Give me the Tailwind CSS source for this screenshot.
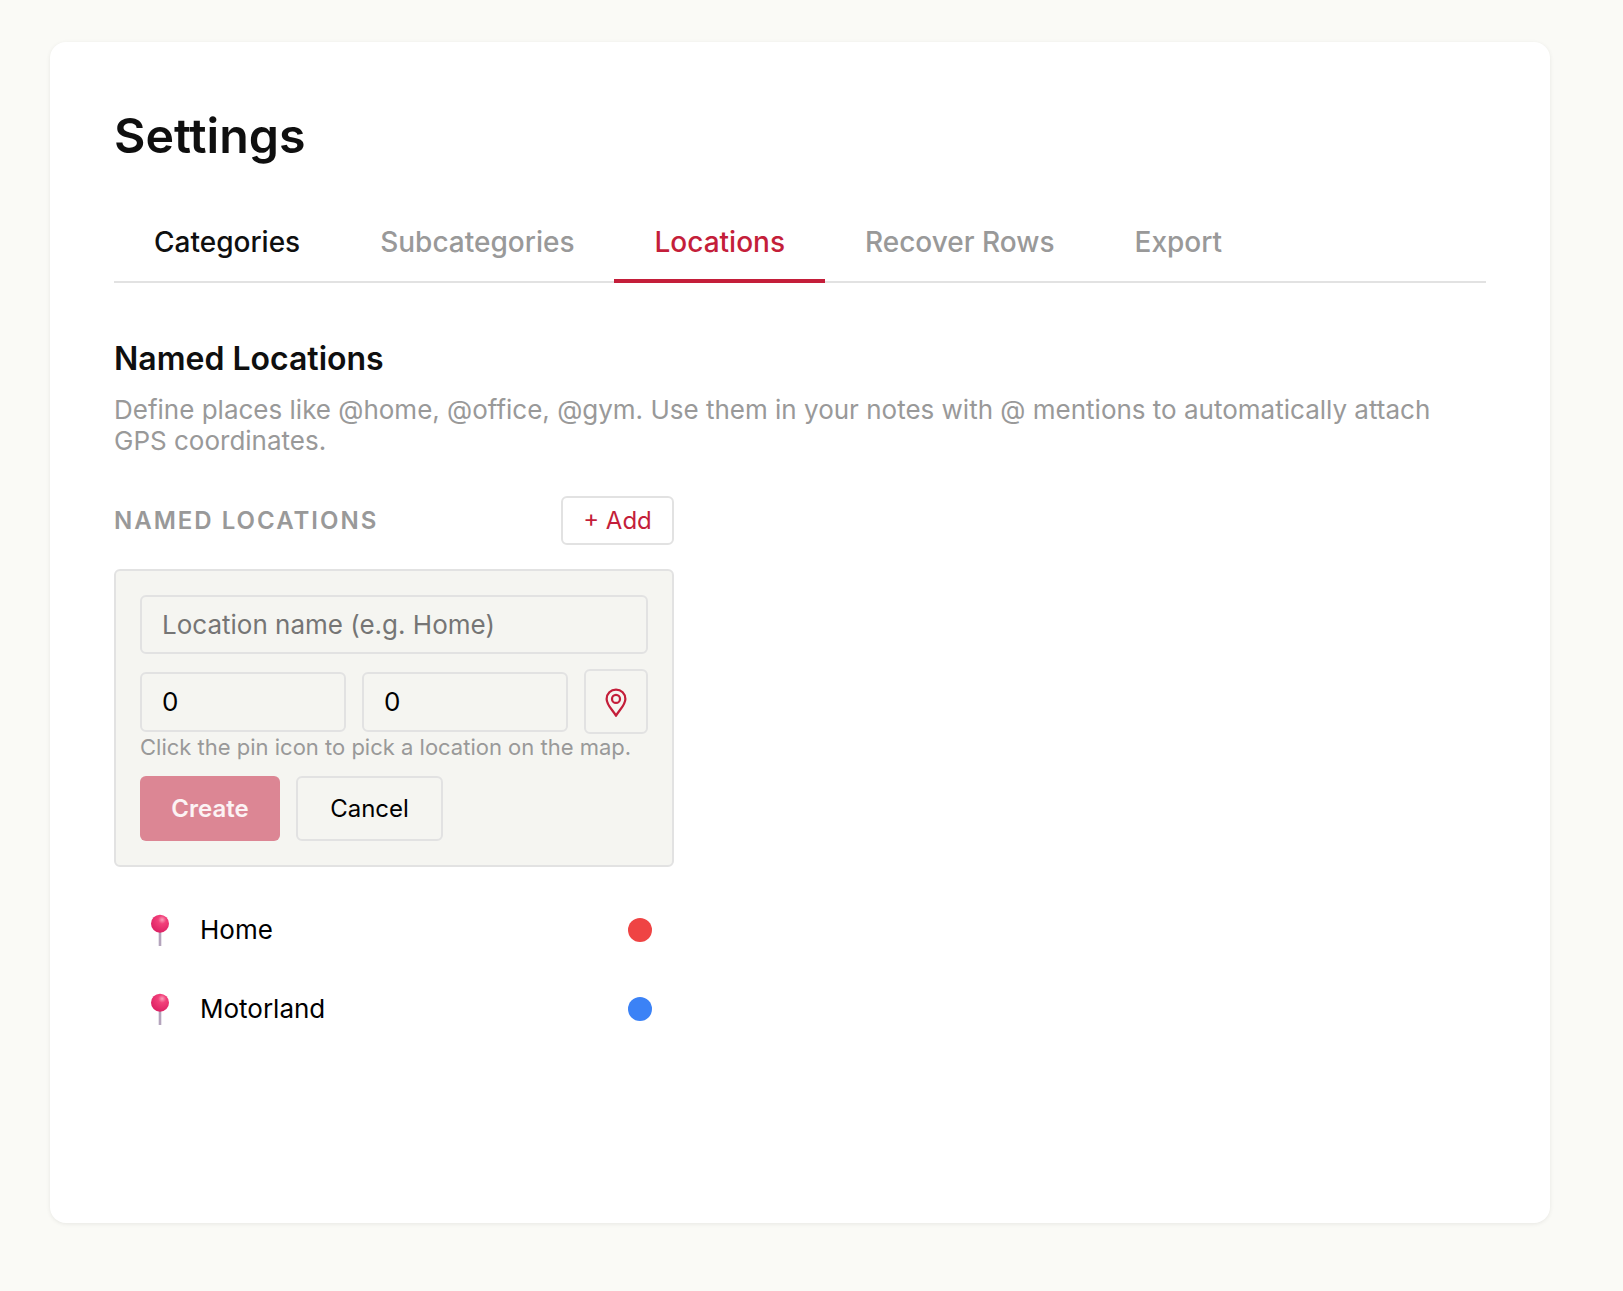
<!DOCTYPE html>
<html lang="en">
  <head>
    <meta charset="UTF-8" />
    <title>Settings</title>
    <script src="https://cdn.jsdelivr.net/npm/@tailwindcss/browser@4"></script>
  </head>
  <body class="bg-[#fafaf6] min-h-screen font-['Inter',sans-serif] text-[#0f0f0f]">
    <div class="pt-[42px] pl-[50px]">
      <div class="w-[1500px] h-[1181px] bg-white rounded-[16px] shadow-[0_1px_4px_rgba(0,0,0,0.08)] px-[64px] pt-[60px]">
        <h1 class="text-[48.3px] leading-[68px] font-semibold">Settings</h1>

        <!-- tabs -->
        <div class="flex mt-[32px] h-[81px] border-b-2 border-[#e2e2e2] text-[28px] font-medium text-[#999999]">
          <button class="px-[40px] h-[81px] pt-[3px] border-b-[4px] border-transparent text-[#0f0f0f]">Categories</button>
          <button class="px-[40px] h-[81px] pt-[3px] border-b-[4px] border-transparent">Subcategories</button>
          <button class="px-[40px] h-[81px] pt-[3px] border-b-[4px] border-[#c41e3a] text-[#c41e3a]">Locations</button>
          <button class="px-[40px] h-[81px] pt-[3px] border-b-[4px] border-transparent">Recover Rows</button>
          <button class="px-[40px] h-[81px] pt-[3px] border-b-[4px] border-transparent">Export</button>
        </div>

        <h2 class="mt-[54px] text-[32px] leading-[44px] font-semibold">Named Locations</h2>
        <p class="mt-[13px] text-[26px] leading-[31px] text-[#999999]">Define places like @home, @office, @gym. Use them in your notes with @ mentions to automatically attach GPS coordinates.</p>

        <div class="w-[560px] mt-[40px]">
          <div class="flex items-center justify-between h-[49px]">
            <span class="text-[24px] font-semibold tracking-[2px] uppercase text-[#999999]">Named Locations</span>
            <button class="w-[113px] h-[49px] border-2 border-[#e2e2e2] rounded-[6px] text-[24px] text-[#c41e3a]">+ Add</button>
          </div>

          <!-- create form -->
          <div class="mt-[24px] h-[298px] bg-[#f5f5f1] border-2 border-[#e2e2e2] rounded-[6px] px-[24px] pt-[24px]">
            <input placeholder="Location name (e.g. Home)" class="w-full h-[59px] px-[20px] bg-transparent border-2 border-[#e2e2e2] rounded-[6px] text-[26px] placeholder:text-[#757575] outline-none" />
            <div class="flex items-center gap-[16px] mt-[15px]">
              <input value="0" class="w-[206px] h-[60px] px-[20px] bg-transparent border-2 border-[#e2e2e2] rounded-[6px] text-[26px] text-black outline-none" />
              <input value="0" class="w-[206px] h-[60px] px-[20px] bg-transparent border-2 border-[#e2e2e2] rounded-[6px] text-[26px] text-black outline-none" />
              <button class="w-[64px] h-[65px] flex items-center justify-center border-2 border-[#e2e2e2] rounded-[6px]">
                <svg width="30" height="30" viewBox="0 0 24 24" fill="none" stroke="#c41e3a" stroke-width="1.8" stroke-linejoin="round">
                  <path d="M12 23C9.5 18.5 4.5 14.5 4.5 9.5a7.5 7.5 0 0 1 15 0C19.5 14.5 14.5 18.5 12 23Z" />
                  <circle cx="12" cy="9.5" r="3.2" />
                </svg>
              </button>
            </div>
            <p class="text-[22px] leading-[26px] text-[#999999]">Click the pin icon to pick a location on the map.</p>
            <div class="flex gap-[16px] mt-[16px]">
              <button class="w-[140px] h-[65px] bg-[#dc8694] rounded-[6px] text-[24px] font-semibold text-white/90">Create</button>
              <button class="w-[147px] h-[65px] border-2 border-[#e2e2e2] rounded-[6px] text-[24px] text-black">Cancel</button>
            </div>
          </div>

          <!-- saved locations -->
          <div class="mt-[23px]">
            <div class="flex items-center h-[79px] pl-[34px] pr-[22px] text-[26px] text-black">
              <svg class="w-[24px] h-[34px] shrink-0" viewBox="0 0 24 34">
                <defs>
                  <radialGradient id="pinHead" cx="0.62" cy="0.28" r="0.75">
                    <stop offset="0" stop-color="#f9a0ba" />
                    <stop offset="0.3" stop-color="#f2407a" />
                    <stop offset="1" stop-color="#dc2063" />
                  </radialGradient>
                </defs>
                <rect x="10.7" y="15" width="2.6" height="18" fill="#b4a4bc" />
                <circle cx="12" cy="10.7" r="9" fill="url(#pinHead)" />
              </svg>
              <span class="ml-[28px]">Home</span>
              <span class="ml-auto w-[24px] h-[24px] rounded-full bg-[#ef4444]"></span>
            </div>
            <div class="flex items-center h-[79px] pl-[34px] pr-[22px] text-[26px] text-black">
              <svg class="w-[24px] h-[34px] shrink-0" viewBox="0 0 24 34">
                <rect x="10.7" y="15" width="2.6" height="18" fill="#b4a4bc" />
                <circle cx="12" cy="10.7" r="9" fill="url(#pinHead)" />
              </svg>
              <span class="ml-[28px]">Motorland</span>
              <span class="ml-auto w-[24px] h-[24px] rounded-full bg-[#3b82f6]"></span>
            </div>
          </div>
        </div>
      </div>
    </div>
  </body>
</html>
